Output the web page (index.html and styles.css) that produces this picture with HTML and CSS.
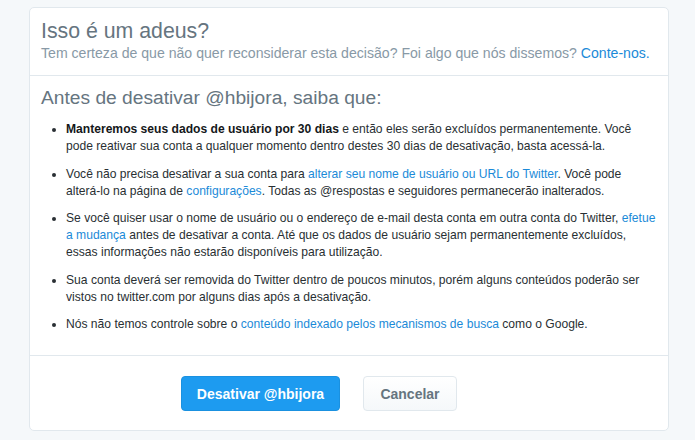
FILE: index.html
```html
<!DOCTYPE html>
<html lang="pt">
<head>
<meta charset="utf-8">
<title>Isso é um adeus?</title>
<link rel="stylesheet" href="styles.css">
</head>
<body>
<div class="card">
  <div class="card-header">
    <h1 class="title">Isso é um adeus?</h1>
    <p class="subtitle">Tem certeza de que não quer reconsiderar esta decisão? Foi algo que nós dissemos? <a href="#" class="link">Conte-nos.</a></p>
  </div>
  <div class="card-body">
    <h2 class="heading">Antes de desativar @hbijora, saiba que:</h2>
    <ul class="notes">
      <li><strong>Manteremos seus dados de usuário por 30 dias</strong> e então eles serão excluídos permanentemente. Você<br>pode reativar sua conta a qualquer momento dentro destes 30 dias de desativação, basta acessá-la.</li>
      <li>Você não precisa desativar a sua conta para <a href="#" class="link">alterar seu nome de usuário ou URL do Twitter</a>. Você pode<br>alterá-lo na página de <a href="#" class="link">configurações</a>. Todas as @respostas e seguidores permanecerão inalterados.</li>
      <li>Se você quiser usar o nome de usuário ou o endereço de e-mail desta conta em outra conta do Twitter, <a href="#" class="link">efetue<br>a mudança</a> antes de desativar a conta. Até que os dados de usuário sejam permanentemente excluídos,<br>essas informações não estarão disponíveis para utilização.</li>
      <li>Sua conta deverá ser removida do Twitter dentro de poucos minutos, porém alguns conteúdos poderão ser<br>vistos no twitter.com por alguns dias após a desativação.</li>
      <li>Nós não temos controle sobre o <a href="#" class="link">conteúdo indexado pelos mecanismos de busca</a> como o Google.</li>
    </ul>
  </div>
  <div class="card-footer">
    <button class="btn btn-primary" type="button">Desativar @hbijora</button>
    <button class="btn btn-default" type="button">Cancelar</button>
  </div>
</div>
</body>
</html>
```
FILE: styles.css
```css
html, body {
  margin: 0;
  padding: 0;
  background: #f5f8fa;
}
body {
  font-family: "Liberation Sans", Arial, Helvetica, sans-serif;
  color: #292f33;
  padding-top: 7px;
}
.card {
  margin-left: 29px;
  width: 638px;
  background: #fff;
  border: 1px solid #e1e8ed;
  border-radius: 5px;
}
.card-header {
  padding: 10px 12px 13px 11px;
  border-bottom: 1px solid #e1e8ed;
}
.title {
  margin: 0;
  font-size: 21.3px;
  line-height: 26px;
  font-weight: normal;
  color: #66757f;
}
.subtitle {
  margin: 0;
  font-size: 14.1px;
  line-height: 18px;
  color: #8899a6;
}
.link {
  color: #1b8ad8;
  text-decoration: none;
}
.card-body {
  padding: 10px 12px 22px 11px;
  border-bottom: 1px solid #e1e8ed;
}
.heading {
  margin: 0;
  font-size: 19.2px;
  line-height: 24px;
  font-weight: normal;
  color: #66757f;
}
.notes {
  margin: 11px 0 0;
  padding-left: 25px;
  font-size: 12.1px;
  line-height: 17px;
  color: #292f33;
}
.notes li {
  margin-bottom: 10.5px;
  white-space: nowrap;
}
.notes li:last-child {
  margin-bottom: 0;
}
.notes strong {
  color: #14171a;
}
.card-footer {
  display: flex;
  gap: 23px;
  padding: 20px 0 19px 151px;
}
.btn {
  height: 35px;
  border-radius: 4px;
  font-family: "Liberation Sans", Arial, Helvetica, sans-serif;
  font-size: 14px;
  font-weight: bold;
  padding: 0;
  cursor: pointer;
}
.btn-primary {
  width: 159px;
  background: #1d9bf0;
  border: 1px solid #1a91e0;
  color: #fff;
}
.btn-default {
  width: 94px;
  background: linear-gradient(#fff, #f5f8fa);
  border: 1px solid #e1e8ed;
  color: #66757f;
}
```
